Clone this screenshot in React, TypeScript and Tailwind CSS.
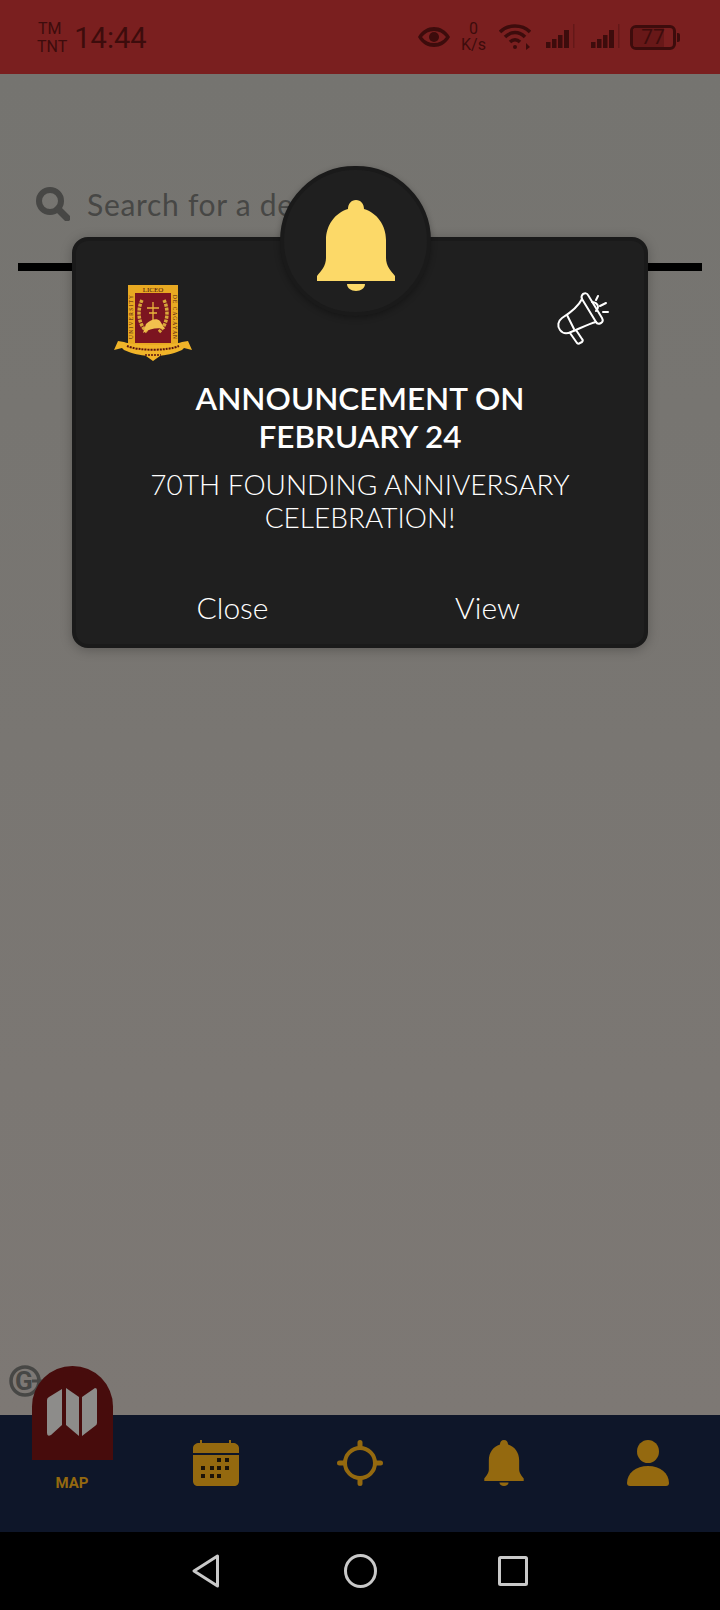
const GOLD = "#94690f";

const BellIcon = ({ className, fill }: { className: string; fill: string }) => (
  <svg viewBox="0 0 78 91" className={className} fill={fill}>
    <path d="M39 0C44 0 47 4 47 9C60 13 69 25 69 40L69 58C69 66 74 71 78 76L78 81L0 81L0 76C4 71 9 66 9 58L9 40C9 25 18 13 31 9C31 4 34 0 39 0Z" />
    <path d="M30 84H48C48 88 44 91 39 91C34 91 30 88 30 84Z" />
  </svg>
);

const Crest = () => (
  <svg viewBox="0 0 78 77" className="h-[77px] w-[78px]">
    <rect x="14" y="1" width="50" height="60" fill="#e8a922" />
    <rect x="21" y="9" width="36" height="50" fill="#7c1420" />
    <text x="39" y="7.5" textAnchor="middle" fontSize="7" fontFamily="Liberation Serif, serif" fill="#4a0f0e">LICEO</text>
    <text transform="translate(19 55) rotate(-90)" fontSize="5.4" textLength="44" fontFamily="Liberation Serif, serif" fill="#4a0f0e">UNIVERSITY</text>
    <text transform="translate(59 11) rotate(90)" fontSize="5.4" textLength="44" fontFamily="Liberation Serif, serif" fill="#4a0f0e">DE CAGAYAN</text>
    <path d="M28 16C23 26 24 40 33 48M50 16C55 26 54 40 45 48" fill="none" stroke="#d9a83a" strokeWidth="3.5" strokeDasharray="3 1" />
    <path d="M39 18V36M33 24H45M35 29H43" stroke="#e8b53c" strokeWidth="1.3" />
    <path d="M29 49L32 40C37 35 43 34 46 37L51 45C43 43 35 45 29 49Z" fill="#f2c14e" />
    <path d="M0 66L4 57L10 58C20 62 58 62 68 58L74 57L78 66L70 64L68 66C60 70 50 71 46 72L39 77L32 72C28 71 18 70 10 66L8 64Z" fill="#f0b429" />
    <path d="M13 62C24 67 54 67 65 62" fill="none" stroke="#5a1210" strokeWidth="2" strokeDasharray="2 1" />
    <path d="M31 71H47" stroke="#5a1210" strokeWidth="1.5" strokeDasharray="2 1" />
  </svg>
);

const Megaphone = () => (
  <svg viewBox="0 0 80 70" className="h-[70px] w-[80px]" fill="none" stroke="#fff" strokeWidth="2" strokeLinecap="round" strokeLinejoin="round">
    <path d="M43 15C41 17 41 18 42 20L56 43C57 45 59 45 61 44C63 43 63 41 62 39L48 16C47 14 45 14 43 15Z" />
    <path d="M42 20C38 28 30 34 22 39C18 42 17 47 20 51C23 55 27 55 31 53C39 50 48 45 56 43" />
    <path d="M27 36L34 50M30 54L37 64C38 65 39 65 40 64L42 63C43 62 43 61 42 60L36 51" />
    <path d="M52 23C55 23 58 25 58 28C58 30 57 31 56 32" />
    <path d="M58 17L56 21M66 24L60 27M68 33H63" />
  </svg>
);

const CalendarIcon = () => (
  <svg viewBox="0 0 46 46" className="h-[46px] w-[46px]">
    <path d="M7 0H9V3H36V0H38V3H40C43 3 46 5 46 8V13H0V8C0 5 3 3 6 3H7Z" fill={GOLD} />
    <path d="M0 15H46V41C46 44 44 46 41 46H5C2 46 0 44 0 41Z" fill={GOLD} />
    <g fill="#1c1408">
      <rect x="24" y="18" width="4" height="4" /><rect x="32" y="18" width="4" height="4" />
      <rect x="8" y="26" width="4" height="4" /><rect x="17" y="26" width="4" height="4" /><rect x="24" y="26" width="4" height="4" /><rect x="32" y="26" width="4" height="4" />
      <rect x="8" y="34" width="4" height="4" /><rect x="17" y="34" width="4" height="4" /><rect x="24" y="34" width="4" height="4" />
    </g>
  </svg>
);

const TargetIcon = () => (
  <svg viewBox="0 0 46 46" className="h-[46px] w-[46px]" fill="none" stroke={GOLD}>
    <circle cx="23" cy="23" r="15" strokeWidth="4" />
    <path d="M23 2.5V7M23 39V43.5M2.5 23H7M39 23H43.5" strokeWidth="5" strokeLinecap="round" />
  </svg>
);

const PersonIcon = () => (
  <svg viewBox="0 0 42 46" className="h-[46px] w-[42px]" fill={GOLD}>
    <ellipse cx="21" cy="11.5" rx="11" ry="11.5" />
    <path d="M0 43C0 33 9 26 21 26C33 26 42 33 42 43C42 45 41 46 39 46H3C1 46 0 45 0 43Z" />
  </svg>
);

const MapIcon = () => (
  <svg viewBox="0 0 50 49" className="h-[49px] w-[50px]" fill="#8d8c8a">
    <path d="M0 12Q0 10 2 9L15 1V37L4 47Q0 49 0 45Z" />
    <path d="M19 0L32 9V48L19 37Z" />
    <path d="M35 9L48 0Q50 0 50 2V35Q50 37 48 38L35 48Z" />
  </svg>
);

const Signal = () => (
  <svg viewBox="0 0 29 26" className="h-[26px] w-[29px]" fill="#3d0c0c">
    <rect x="0" y="18" width="4.5" height="6" />
    <rect x="6" y="15" width="4.5" height="9" />
    <rect x="12" y="11" width="4.5" height="13" />
    <rect x="18" y="6" width="5" height="18" />
    <rect x="27" y="0" width="1.5" height="24" opacity="0.35" />
  </svg>
);

const StatusBar = () => (
  <div className="flex h-[74px] items-center justify-between bg-[#7a1f1f] pl-[37px] pr-[40px] font-['Roboto',sans-serif] text-[#3d0c0c]">
    <div className="flex items-center gap-[7px]">
      <div className="flex flex-col items-start pt-[2px] text-[16px] leading-[18px]">
        <span className="pl-[1px]">TM</span>
        <span>TNT</span>
      </div>
      <span className="pt-[2px] text-[29px] leading-none">14:44</span>
    </div>
    <div className="flex items-center">
      <svg viewBox="0 0 32 22" className="h-[22px] w-[32px]" fill="#3d0c0c">
        <path fillRule="evenodd" d="M0 11C4 4 10 1 16 1C22 1 28 4 32 11C28 18 22 21 16 21C10 21 4 18 0 11ZM4 11C7 15 11 17 16 17C21 17 25 15 28 11C25 7 21 5 16 5C11 5 7 7 4 11Z" />
        <circle cx="16" cy="11" r="5" />
      </svg>
      <div className="ml-[10px] flex w-[27px] flex-col items-center text-[16px] leading-[16px]">
        <span>0</span>
        <span>K/s</span>
      </div>
      <svg viewBox="0 0 32 28" className="ml-[12px] h-[28px] w-[32px]" fill="none" stroke="#3d0c0c" strokeWidth="3.5">
        <path d="M1 9C9 1 23 1 31 9M6 14C12 8 20 8 26 14M11 19C14 16 18 16 21 19" />
        <circle cx="16" cy="24" r="2" fill="#3d0c0c" stroke="none" />
        <path d="M27 20V27L31 24Z" fill="#3d0c0c" stroke="none" />
      </svg>
      <div className="ml-[15px]"><Signal /></div>
      <div className="ml-[16px]"><Signal /></div>
      <div className="ml-[10px] flex items-center">
        <div className="relative flex h-[25px] w-[46px] items-center justify-center overflow-hidden rounded-[6px] border-[3px] border-[#3d0c0c] text-[21px] leading-none">
          <div className="absolute inset-y-0 left-0 w-[77%] bg-[#681818]" />
          <span className="relative">77</span>
        </div>
        <div className="ml-[1px] h-[9px] w-[3px] rounded-r-[2px] bg-[#3d0c0c]" />
      </div>
    </div>
  </div>
);

const Modal = () => (
  <div className="absolute left-[72px] top-[163px] h-[411px] w-[576px] rounded-[16px] border-[4px] border-[#1a1a1a] bg-[#1f1f1f] font-['Lato',sans-serif] text-white shadow-[0_2px_12px_rgba(0,0,0,0.25)]">
    <div className="absolute left-[204px] top-[-75px] flex h-[150px] w-[151px] items-center justify-center rounded-full border-[4px] border-[#1a1a1a] bg-[#1f1f1f] shadow-[0_2px_6px_rgba(0,0,0,0.3)]">
      <BellIcon className="mt-[9px] h-[91px] w-[78px]" fill="#fcd968" />
    </div>
    <div className="flex items-start justify-between pl-[38px] pr-[24px] pt-[38px]">
      <div className="pt-[5px]"><Crest /></div>
      <Megaphone />
    </div>
    <h2 className="mt-[18px] text-center text-[31.5px] font-semibold leading-[38px]">
      ANNOUNCEMENT ON
      <br />
      FEBRUARY 24
    </h2>
    <p className="mt-[13px] text-center text-[28px] font-light leading-[33px]">
      70TH FOUNDING ANNIVERSARY
      <br />
      CELEBRATION!
    </p>
    <div className="mt-[53px] grid grid-cols-2 px-[29px] text-center text-[30px] font-light leading-[40px]">
      <span>Close</span>
      <span>View</span>
    </div>
  </div>
);

const BottomNav = () => (
  <div className="relative z-10 grid h-[117px] grid-cols-5 bg-[#0e1629]">
    <div className="flex flex-col items-center">
      <div className="mt-[-49px] flex h-[94px] w-[81px] items-start justify-center rounded-t-full bg-[#470c0c] pt-[22px]">
        <MapIcon />
      </div>
      <span className="mt-[14px] font-['Roboto',sans-serif] text-[15px] font-bold leading-[18px] text-[#94690f]">MAP</span>
    </div>
    <div className="flex justify-center pt-[25px]"><CalendarIcon /></div>
    <div className="flex justify-center pt-[25px]"><TargetIcon /></div>
    <div className="flex justify-center pt-[25px]"><BellIcon className="h-[46px] w-[40px]" fill={GOLD} /></div>
    <div className="flex justify-center pt-[25px]"><PersonIcon /></div>
  </div>
);

const SystemNav = () => (
  <div className="flex h-[78px] items-center justify-center bg-black pb-[1px] pr-[1px]">
    <svg viewBox="0 0 27 34" className="h-[34px] w-[27px]" fill="none" stroke="#c9c9c9" strokeWidth="3" strokeLinejoin="round">
      <path d="M25.5 2V32L2 17Z" />
    </svg>
    <svg viewBox="0 0 33 34" className="ml-[125px] h-[34px] w-[33px]" fill="none" stroke="#c9c9c9" strokeWidth="3">
      <ellipse cx="16.5" cy="17" rx="15" ry="15.5" />
    </svg>
    <svg viewBox="0 0 30 30" className="ml-[121px] h-[30px] w-[30px]" fill="none" stroke="#c9c9c9" strokeWidth="3" strokeLinejoin="round">
      <rect x="1.5" y="1.5" width="27" height="27" rx="1" />
    </svg>
  </div>
);

const GoogleMark = () => (
  <svg viewBox="0 0 46 34" className="absolute bottom-[17px] left-[8px] h-[34px] w-[46px]">
    <circle cx="17" cy="17" r="14" fill="none" stroke="#474745" strokeWidth="3.5" />
    <path d="M24 17H40" stroke="#474745" strokeWidth="3" />
    <text x="7" y="26" fontFamily="Roboto, sans-serif" fontSize="26" fontWeight="700" fill="#474745">G</text>
  </svg>
);

export default function App() {
  return (
    <div className="flex h-[1610px] w-[720px] flex-col overflow-hidden bg-black">
      <StatusBar />
      <div className="relative flex-1 bg-gradient-to-b from-[#757470] to-[#7d7874]">
        <div className="flex items-center pl-[36px] pt-[113px]">
          <svg viewBox="0 0 34 34" className="h-[34px] w-[34px]" fill="none" stroke="#474745">
            <circle cx="14" cy="14" r="11" strokeWidth="6" />
            <path d="M22 22L31 31" strokeWidth="7" strokeLinecap="round" />
          </svg>
          <span className="ml-[17px] font-['Lato',sans-serif] text-[30px] leading-[34px] tracking-[0.7px] text-[#474745]">Search for a destination</span>
        </div>
        <div className="mx-[18px] mt-[42px] h-[8px] bg-black" />
        <Modal />
        <GoogleMark />
      </div>
      <BottomNav />
      <SystemNav />
    </div>
  );
}
